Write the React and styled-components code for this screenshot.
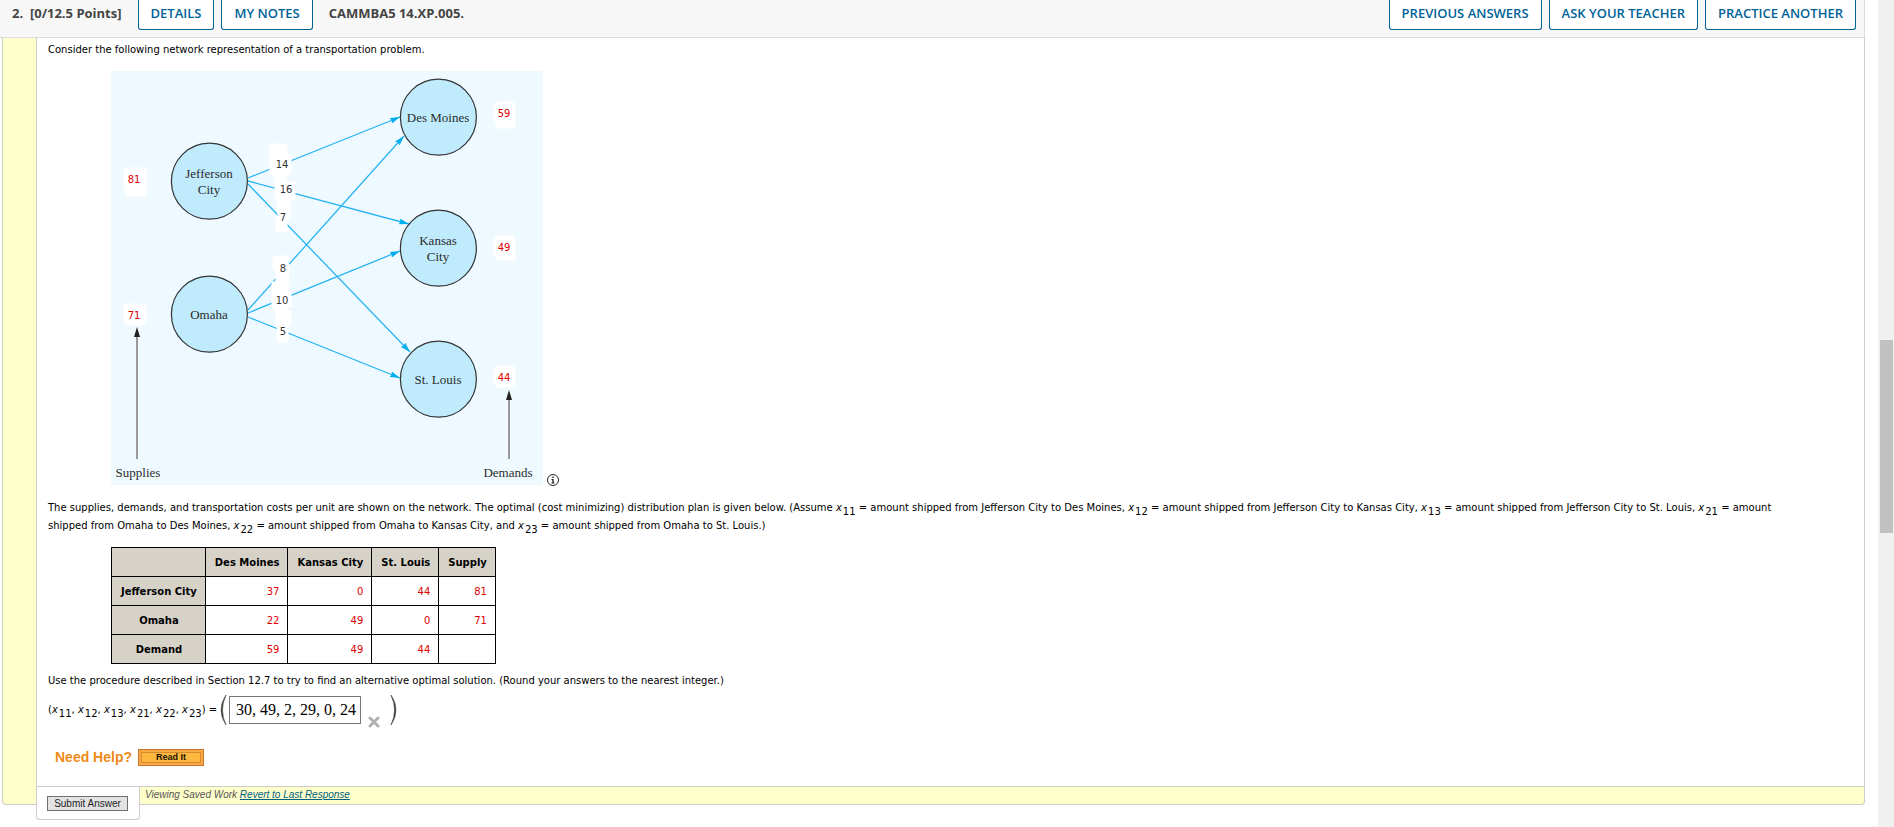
import React from 'react';
import styled, { createGlobalStyle, css } from 'styled-components';

const GlobalStyle = createGlobalStyle`
    * {
        box-sizing: border-box;
    }

    body {
        margin: 0;
        background: #fff;
        color: #000;
        font-family: Verdana, "DejaVu Sans", sans-serif;
        font-size: 10px;
        line-height: 18px;
    }
`;

const Page = styled.div`
    display: flex;
    min-height: 100vh;
`;

const Main = styled.main`
    flex: 1;
    min-width: 0;
    padding-right: 13px;
`;

const ScrollTrack = styled.div`
    width: 16px;
    padding: 340px 1px 0 2px;
    background: #f0f0f0;
`;

const ScrollThumb = styled.div`
    height: 193px;
    background: #c1c1c1;
`;

const Header = styled.header`
    display: flex;
    align-items: flex-start;
    height: 38px;
    padding: 0 8px 0 12px;
    background: #f7f7f7;
    border-right: 1px solid #ddd;
    border-bottom: 1px solid #ddd;
    font-family: "Open Sans", sans-serif;
    font-size: 13px;
    line-height: 26px;
    color: #444;
`;

const HeaderText = styled.h2`
    margin: 0 16px 0 0;
    font-size: 13px;
    font-weight: 700;
    white-space: pre;
`;

const HeaderButtons = styled.div`
    display: flex;
    gap: 7px;
    margin-right: 16px;

    &:last-child {
        margin: 0 0 0 auto;
    }
`;

const HeaderButton = styled.button`
    height: 30px;
    padding: 0 12px 4px;
    border: 1px solid #006298;
    border-top: 0;
    border-radius: 0 0 3px 3px;
    background: #fff;
    color: #006298;
    font-family: inherit;
    font-size: 13px;
    font-weight: 600;
    line-height: 26px;
`;

const Question = styled.section`
    margin-left: 2px;
    padding-left: 33px;
    border: 1px solid #ccc;
    border-top: 0;
    border-radius: 0 0 4px 4px;
    background: #ffc;
`;

const Content = styled.div`
    padding: 3px 10px 20px 11px;
    border-left: 1px solid #ccc;
    border-bottom: 1px solid #ccc;
    background: #fff;
`;

const Text = styled.p`
    margin: 0;
    padding-right: ${props => props.$space || 0};

    sub {
        margin-left: 1px;
        font-size: 10px;
        line-height: 0;
        vertical-align: -4px;
    }
`;

const Figure = styled.figure`
    display: flex;
    align-items: flex-end;
    gap: 3px;
    margin: 12px 0 14px 63px;
`;

const Network = styled.svg`
    width: 432px;
    height: 414px;
    background: #eefaff;
`;

const InfoIcon = styled.svg`
    width: 14px;
    height: 14px;
    margin-bottom: -2px;
`;

const PlanTable = styled.table`
    margin: 12px 0 8px 63px;
    border-collapse: collapse;
`;

const cell = css`
    height: 29px;
    padding: 1px 8px 0 9px;
    border: 1px solid #000;
`;

const HeadCell = styled.th`
    ${cell}
    background: #d6d2c8;
    font-weight: 700;
`;

const Cell = styled.td`
    ${cell}
    text-align: right;
    color: #d00;
`;

const AnswerRow = styled.div`
    display: flex;
    align-items: center;
    margin-top: 4px;
`;

const Paren = styled.svg`
    width: 8px;
    height: 32px;
    margin-left: ${props => props.$space};
`;

const AnswerInput = styled.input`
    width: 132px;
    height: 28px;
    margin-left: 2px;
    padding: 0 0 0 6px;
    border: 1px solid #777;
    font-family: "Liberation Serif", serif;
    font-size: 16px;
`;

const WrongMark = styled.svg`
    align-self: flex-end;
    width: 12px;
    height: 12px;
    margin: 0 0 -2px 7px;
`;

const HelpRow = styled.div`
    display: flex;
    align-items: center;
    gap: 6px;
    margin: 22px 0 0 7px;
    font-family: "Liberation Sans", sans-serif;
`;

const HelpTitle = styled.span`
    color: #f08a18;
    font-size: 14px;
    font-weight: 700;
`;

const ReadButton = styled.button`
    width: 66px;
    height: 17px;
    padding: 0;
    border: 1px solid #c87828;
    background: #fdb93e;
    box-shadow: inset 0 0 0 2px #f9a848, inset 0 0 0 3px #d98a30;
    color: #221100;
    font-family: inherit;
    font-size: 9px;
    font-weight: 700;
    line-height: 15px;
`;

const Footer = styled.div`
    display: flex;
    align-items: flex-start;
    height: 17px;
    font-family: "Liberation Sans", sans-serif;
`;

const SubmitTab = styled.div`
    height: 33px;
    padding: 9px 11px 0 10px;
    border: 1px solid #ccc;
    border-top: 0;
    border-radius: 0 0 4px 4px;
    background: #fff;
`;

const SubmitButton = styled.button`
    display: block;
    width: 81px;
    height: 15px;
    padding: 0;
    border: 1px solid #707070;
    background: #e3e3e3;
    color: #222;
    font-family: inherit;
    font-size: 10px;
    line-height: 13px;
`;

const SavedNote = styled.em`
    margin-left: 5px;
    color: #555;
    font-size: 10px;
    line-height: 16px;
`;

const RevertLink = styled.a`
    color: #006080;
`;

const cities = [
    { x: 98, y: 110, lines: ['Jefferson', 'City'] },
    { x: 98, y: 243, lines: ['Omaha'] },
    { x: 327, y: 46, lines: ['Des Moines'] },
    { x: 327, y: 177, lines: ['Kansas', 'City'] },
    { x: 327, y: 308, lines: ['St. Louis'] },
];

const routes = [
    { from: [137, 107], to: [289, 46] },
    { from: [137, 110], to: [298, 153] },
    { from: [137, 113], to: [299, 281] },
    { from: [137, 239], to: [293, 65] },
    { from: [137, 242], to: [289, 180] },
    { from: [137, 246], to: [289, 307] },
];

const costs = [
    { x: 171, y: 93, value: '14', patch: 'M159 73h17v10h4v20h-5v7h-12v-7h-4z' },
    { x: 175, y: 118, value: '16', patch: 'M164 111h20v18h-5v5h-13v-5h-2z' },
    { x: 172, y: 146, value: '7', patch: 'M167 128h12v20h-3v13h-11v-15h2z' },
    { x: 172, y: 197, value: '8', patch: 'M162 185h15v8h1v15h-2v6h-11v-15h-3z' },
    { x: 171, y: 229, value: '10', patch: 'M161 211h17v11h2v14h-4v4h-13v-5h-2z' },
    { x: 172, y: 260, value: '5', patch: 'M165 240h15v15h-3v16h-11v-15h-1z' },
];

const amounts = [
    { x: 23, y: 108, value: '81', patch: 'M15 97h20v28H15v-6h-2v-20z' },
    { x: 23, y: 244, value: '71', patch: 'M13 233h19v1h3v17h-2v3H16l-3-3z' },
    { x: 393, y: 42, value: '59', patch: 'M386 31h16l2 2v24h-19v-5l-2-2V34z' },
    { x: 393, y: 176, value: '49', patch: 'M386 165h16l2 2v22h-17l-4-4v-17z' },
    { x: 393, y: 306, value: '44', patch: 'M386 295h14l1 1h3v18h-1l-2 2h-15l-3-3v-15z' },
];

const rows = [
    ['Jefferson City', 37, 0, 44, 81],
    ['Omaha', 22, 49, 0, 71],
    ['Demand', 59, 49, 44, ''],
];

const X = ({ n }) => (
    <><i>x</i><sub>{n}</sub></>
);

const NetworkDiagram = () => (
    <Network viewBox="0 0 432 414" role="img" aria-label="Transportation network">
        <defs>
            <marker id="route" markerUnits="userSpaceOnUse" markerWidth="10" markerHeight="6" refX="10" refY="3" orient="auto">
                <path d="M0 0 10 3 0 6 1 3z" fill="#00aeef" />
            </marker>
        </defs>
        {routes.map(({ from, to }) => (
            <line key={from + '-' + to} x1={from[0]} y1={from[1]} x2={to[0]} y2={to[1]} stroke="#29b4f3" strokeWidth="1.3" markerEnd="url(#route)" />
        ))}
        {cities.map(({ x, y, lines }) => (
            <g key={x + '-' + y}>
                <circle cx={x + 0.4} cy={y + 0.2} r="38" fill="#bfebfd" stroke="#333" strokeWidth="1.2" />
                <text textAnchor="middle" fontFamily="Liberation Serif, serif" fontSize="13" fill="#2b2b2b">
                    {lines.map((line, i) => (
                        <tspan key={line} x={x} y={y + 5 - (lines.length - 1) * 8 + i * 16}>{line}</tspan>
                    ))}
                </text>
            </g>
        ))}
        {costs.map(({ x, y, value, patch }) => (
            <g key={value}>
                <path d={patch} fill="#fff" stroke="#fff" strokeLinejoin="round" />
                <text x={x} y={y + 4} textAnchor="middle" fontSize="10" fill="#333">{value}</text>
            </g>
        ))}
        {amounts.map(({ x, y, value, patch }) => (
            <g key={value}>
                <path d={patch} fill="#fff" stroke="#fff" strokeLinejoin="round" />
                <text x={x} y={y + 4} textAnchor="middle" fontSize="10" fill="#d00">{value}</text>
            </g>
        ))}
        <path d="M26 264V388M398 327V388" stroke="#999" strokeWidth="2" />
        <path d="M26 256 29 266H23zM398 319 401 329H395z" fill="#222" />
        <g fontFamily="Liberation Serif, serif" fontSize="13" fill="#2b2b2b" textAnchor="middle">
            <text x="27" y="406">Supplies</text>
            <text x="397" y="406">Demands</text>
        </g>
    </Network>
);

export default class App extends React.Component {
    render () {
        return (
            <Page>
                <GlobalStyle />
                <Main>
                    <Header>
                        <HeaderText>2.  [0/12.5 Points]</HeaderText>
                        <HeaderButtons>
                            <HeaderButton>DETAILS</HeaderButton>
                            <HeaderButton>MY NOTES</HeaderButton>
                        </HeaderButtons>
                        <HeaderText>CAMMBA5 14.XP.005.</HeaderText>
                        <HeaderButtons>
                            <HeaderButton>PREVIOUS ANSWERS</HeaderButton>
                            <HeaderButton>ASK YOUR TEACHER</HeaderButton>
                            <HeaderButton>PRACTICE ANOTHER</HeaderButton>
                        </HeaderButtons>
                    </Header>
                    <Question>
                        <Content>
                            <Text>Consider the following network representation of a transportation problem.</Text>
                            <Figure>
                                <NetworkDiagram />
                                <InfoIcon viewBox="0 0 14 14" aria-label="Image description">
                                    <circle cx="7" cy="7" r="5.5" fill="none" stroke="#222" />
                                    <path d="M6.3 3.5h1.4v1.4H6.3zM5.5 6h2.2v3.6h.8v.9h-3v-.9h.8V6.9h-.8z" fill="#222" />
                                </InfoIcon>
                            </Figure>
                            <Text $space="60px">
                                The supplies, demands, and transportation costs per unit are shown on the network. The optimal (cost minimizing) distribution plan is given below. (Assume <X n="11" /> = amount shipped from Jefferson City to Des Moines, <X n="12" /> = amount shipped from Jefferson City to Kansas City, <X n="13" /> = amount shipped from Jefferson City to St. Louis, <X n="21" /> = amount shipped from Omaha to Des Moines, <X n="22" /> = amount shipped from Omaha to Kansas City, and <X n="23" /> = amount shipped from Omaha to St. Louis.)
                            </Text>
                            <PlanTable>
                                <thead>
                                    <tr>
                                        <HeadCell as="td" />
                                        <HeadCell scope="col">Des Moines</HeadCell>
                                        <HeadCell scope="col">Kansas City</HeadCell>
                                        <HeadCell scope="col">St. Louis</HeadCell>
                                        <HeadCell scope="col">Supply</HeadCell>
                                    </tr>
                                </thead>
                                <tbody>
                                    {rows.map(([name, ...values]) => (
                                        <tr key={name}>
                                            <HeadCell scope="row">{name}</HeadCell>
                                            {values.map((value, i) => <Cell key={i}>{value}</Cell>)}
                                        </tr>
                                    ))}
                                </tbody>
                            </PlanTable>
                            <Text>Use the procedure described in Section 12.7 to try to find an alternative optimal solution. (Round your answers to the nearest integer.)</Text>
                            <AnswerRow>
                                <Text as="label" htmlFor="answer">
                                    (<X n="11" />, <X n="12" />, <X n="13" />, <X n="21" />, <X n="22" />, <X n="23" />) =
                                </Text>
                                <Paren $space="2px" viewBox="0 0 8 32">
                                    <path d="M7 1Q-3 16 7 31Q0 16 7 1z" fill="#444" stroke="#444" strokeWidth="0.6" />
                                </Paren>
                                <AnswerInput id="answer" defaultValue="30, 49, 2, 29, 0, 24" />
                                <WrongMark viewBox="0 0 12 12" aria-label="Incorrect">
                                    <path d="M2 2 10 10M10 2 2 10" stroke="#b0b0b0" strokeWidth="3" strokeLinecap="round" />
                                </WrongMark>
                                <Paren $space="10px" viewBox="0 0 8 32">
                                    <path d="M1 1Q11 16 1 31Q8 16 1 1z" fill="#444" stroke="#444" strokeWidth="0.6" />
                                </Paren>
                            </AnswerRow>
                            <HelpRow>
                                <HelpTitle>Need Help?</HelpTitle>
                                <ReadButton>Read It</ReadButton>
                            </HelpRow>
                        </Content>
                        <Footer>
                            <SubmitTab>
                                <SubmitButton>Submit Answer</SubmitButton>
                            </SubmitTab>
                            <SavedNote>Viewing Saved Work <RevertLink href="#">Revert to Last Response</RevertLink></SavedNote>
                        </Footer>
                    </Question>
                </Main>
                <ScrollTrack>
                    <ScrollThumb />
                </ScrollTrack>
            </Page>
        );
    }
}
